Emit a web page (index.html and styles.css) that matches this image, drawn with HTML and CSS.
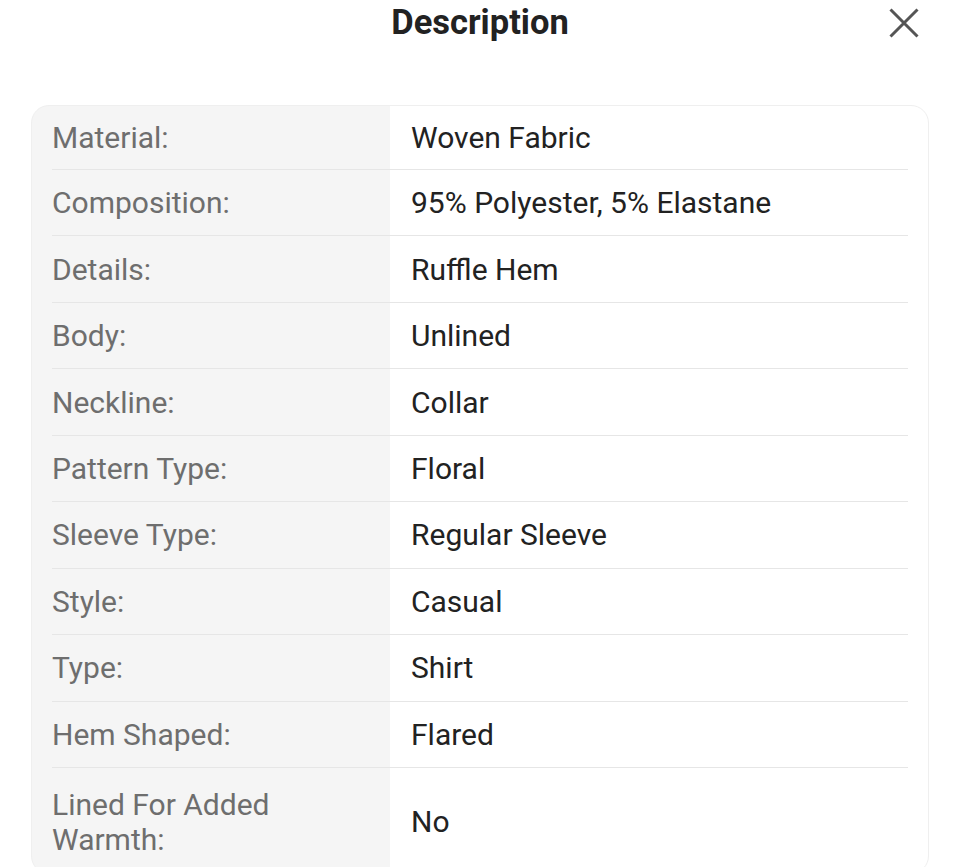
FILE: index.html
```html
<!DOCTYPE html>
<html>
<head>
<meta charset="utf-8">
<link rel="stylesheet" href="styles.css">
</head>
<body>
<header class="header">
  <h1 class="title">Description</h1>
  <button class="close" aria-label="Close">
    <svg width="30" height="30" viewBox="0 0 30 30"><path d="M1.5 1.5 L28.5 28.5 M28.5 1.5 L1.5 28.5" stroke="#555" stroke-width="3" fill="none" stroke-linecap="butt"/></svg>
  </button>
</header>
<div class="card">
  <div class="row"><div class="label">Material:</div><div class="value">Woven Fabric</div></div>
  <div class="row"><div class="label">Composition:</div><div class="value">95% Polyester, 5% Elastane</div></div>
  <div class="row"><div class="label">Details:</div><div class="value">Ruffle Hem</div></div>
  <div class="row"><div class="label">Body:</div><div class="value">Unlined</div></div>
  <div class="row"><div class="label">Neckline:</div><div class="value">Collar</div></div>
  <div class="row"><div class="label">Pattern Type:</div><div class="value">Floral</div></div>
  <div class="row"><div class="label">Sleeve Type:</div><div class="value">Regular Sleeve</div></div>
  <div class="row"><div class="label">Style:</div><div class="value">Casual</div></div>
  <div class="row"><div class="label">Type:</div><div class="value">Shirt</div></div>
  <div class="row"><div class="label">Hem Shaped:</div><div class="value">Flared</div></div>
  <div class="row"><div class="label">Lined For Added Warmth:</div><div class="value">No</div></div>
</div>
</body>
</html>
```
FILE: styles.css
```css
* { box-sizing: border-box; }
html, body { margin: 0; padding: 0; background: #fff; }
body {
  font-family: Roboto, "Liberation Sans", sans-serif;
  width: 960px;
  height: 867px;
  overflow: hidden;
}
.header {
  position: relative;
  height: 44px;
  display: flex;
  justify-content: center;
  align-items: center;
}
.title {
  margin: 0;
  font-size: 34.5px;
  font-weight: 700;
  color: #222;
  line-height: 44px;
}
.close {
  position: absolute;
  right: 41px;
  top: 8px;
  width: 30px;
  height: 30px;
  padding: 0;
  border: 0;
  background: none;
}
.close svg { display: block; }
.card {
  margin: 61px 31px 0;
  border: 1px solid #efefef;
  border-radius: 18px;
  background: linear-gradient(to right, #f5f5f5 358px, #fff 358px);
  overflow: hidden;
}
.row {
  margin: 0 20px;
  display: flex;
  align-items: center;
  min-height: 66.45px;
  border-bottom: 1px solid #e6e6e6;
  padding: 14px 0;
}
.row:first-child { min-height: 64px; }
.row:last-child { padding: 19px 0 15px; }
.label {
  width: 338px;
  flex: none;
  font-size: 30px;
  line-height: 35px;
  color: #6e6e6e;
  padding-right: 60px;
}
.value {
  padding-left: 21px;
  font-size: 30px;
  line-height: 35px;
  color: #222;
}
```
